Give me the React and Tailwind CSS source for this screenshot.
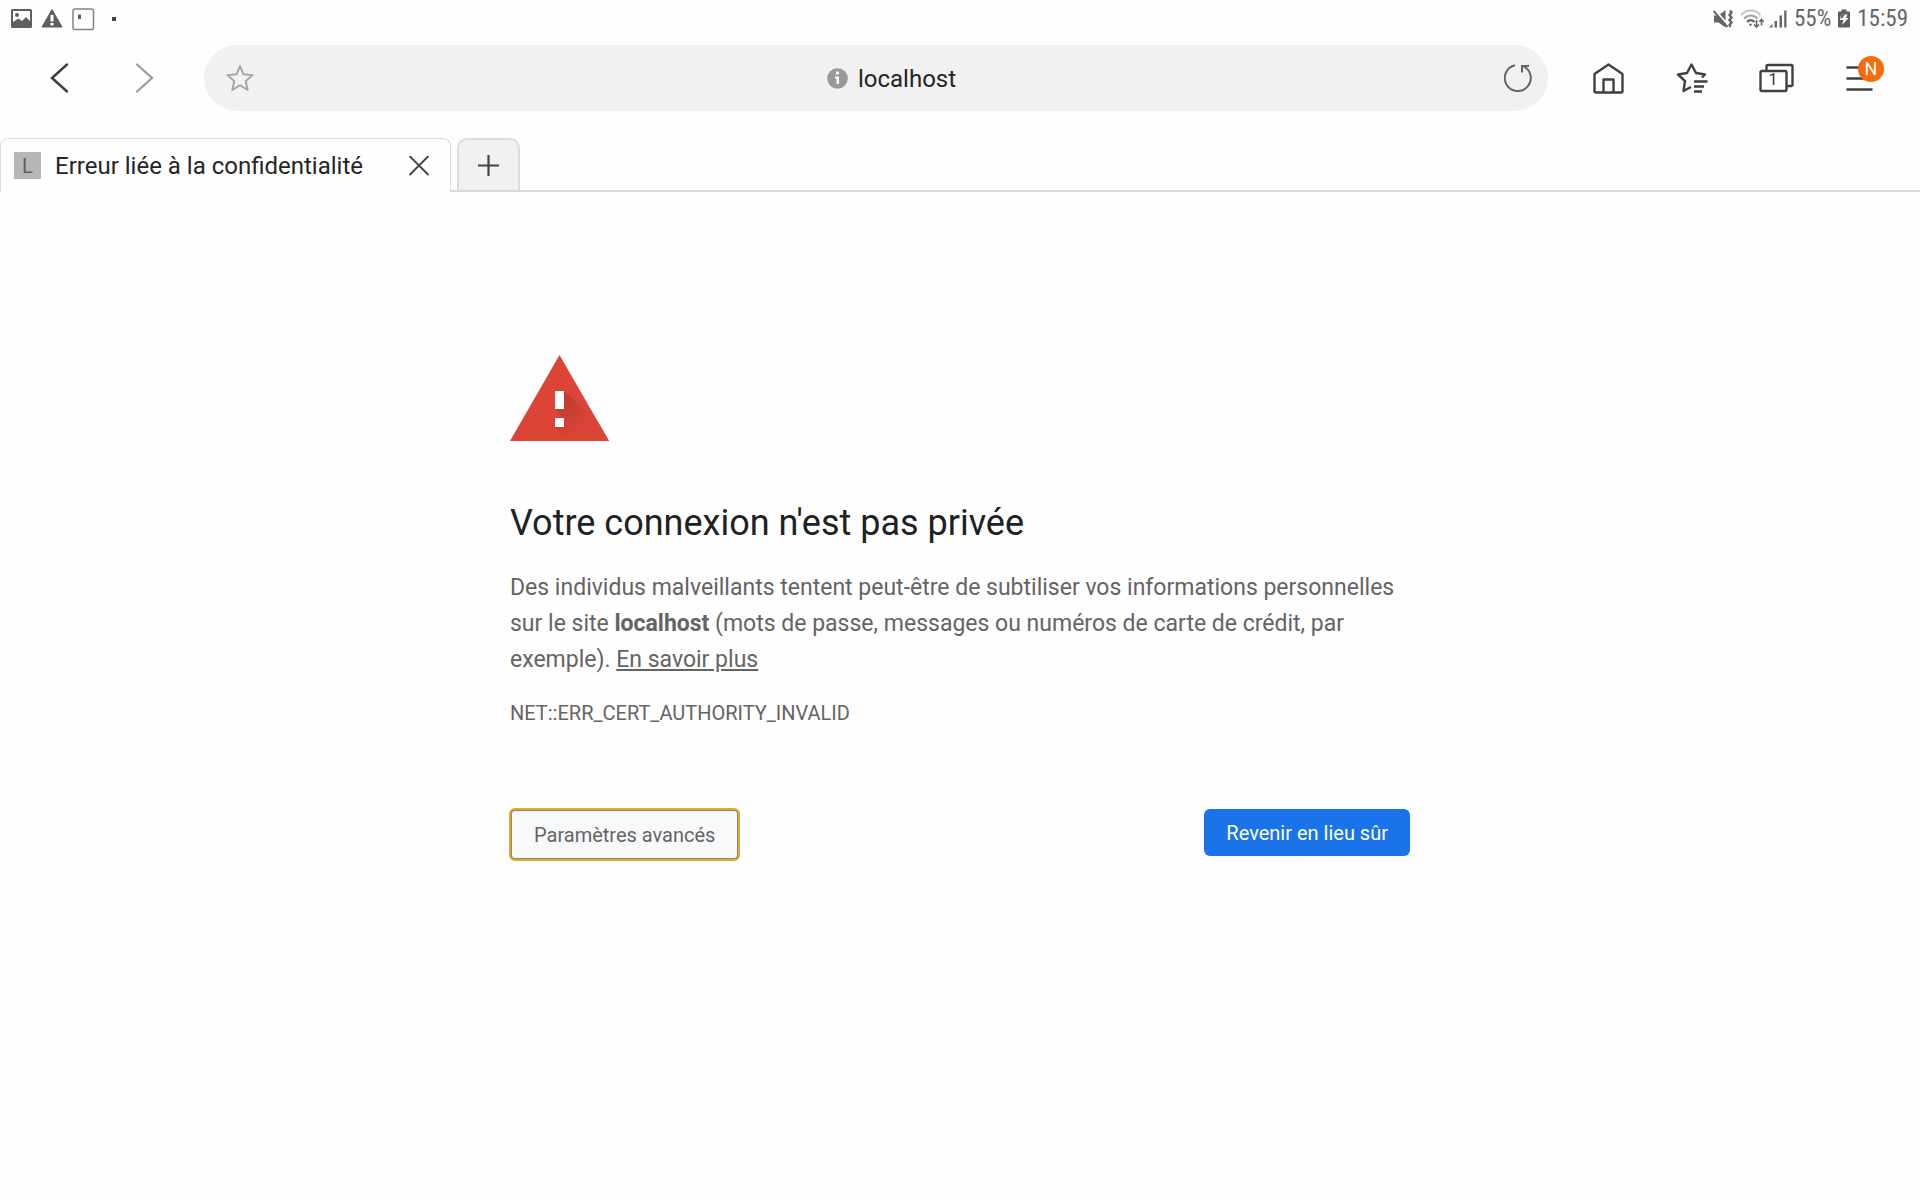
import React from "react";

function PictureIcon() {
  return (
    <svg className="h-5 w-[21px]" viewBox="0 0 21 20" aria-hidden="true">
      <path fillRule="evenodd" fill="#5f5f5f" d="M1.5 0h18A1.5 1.5 0 0 1 21 1.500v16a1.500 1.500 0 0 1-1.500 1.500h-18A1.500 1.500 0 0 1 0 17.500v-16A1.500 1.500 0 0 1 1.500 0zM2 2v11l5.500-3.500 3.500 2.500 4-4 4 4V2z" />
      <circle cx="6" cy="6" r="2" fill="#5f5f5f" />
    </svg>
  );
}

function AlertIcon() {
  return (
    <svg className="h-5 w-[22px]" viewBox="0 0 22 20" aria-hidden="true">
      <path d="M11 .5 21 18H1z" fill="#5f5f5f" stroke="#5f5f5f" strokeWidth="1" strokeLinejoin="round" />
      <path d="M9.500 6h3v6.500h-3zM9.500 14h3v2.500h-3z" fill="#fff" />
    </svg>
  );
}

function AppIcon() {
  return (
    <svg className="h-[23px] w-[23px]" viewBox="0 0 23 23" aria-hidden="true">
      <rect x="1" y="1" width="20.500" height="20.500" rx="2" fill="none" stroke="#828282" strokeWidth="1.500" />
      <path d="M6 6.500h3v4.500H6z" fill="#5f5f5f" />
    </svg>
  );
}

function MuteIcon() {
  return (
    <svg className="h-5 w-5" viewBox="0 0 20 20" aria-hidden="true">
      <path d="M1 6.500h4.500L12.500 1v17.500L5.500 13.500H1z" fill="#666" />
      <path d="M1 0 15 16" stroke="#fff" strokeWidth="2" />
      <path d="M.5 1.800 14.500 18" stroke="#666" strokeWidth="2" />
      <path d="M17 1.500l1.500 2-2 2.500 2 2.500-2 2.500 2 2.500-2 2.500 1 2" fill="none" stroke="#666" strokeWidth="2.400" />
    </svg>
  );
}

function WifiIcon() {
  return (
    <svg className="h-5 w-[25px]" viewBox="0 0 25 20" fill="none" aria-hidden="true">
      <path d="M1 6C6.500 0 15 0 20.500 6" stroke="#c4c4c4" strokeWidth="2" />
      <path d="M4 9.500c4-4 9.500-4 13.500 0" stroke="#a2a2a2" strokeWidth="2" />
      <path d="M7 13c2.500-2.500 5-2.500 7.500 0" stroke="#666" strokeWidth="2" />
      <path d="M8.500 14.800h4l-2 2.400z" fill="#666" />
      <path d="M16.500 11v7M14 15.500l2.500 2.500 2.500-2.500M21.500 16.500v-6M19.300 12.800l2.200-2.300 2.200 2.300" stroke="#666" strokeWidth="1.600" />
    </svg>
  );
}

function SignalIcon() {
  return (
    <svg className="h-5 w-[18px]" viewBox="0 0 18 20" aria-hidden="true">
      <path d="M0 18.500 3.500 15v3.500zM5.500 12H8v6.500H5.500zM10.500 6.500H13v12h-2.500zM15.200 1.500H17.500v17h-2.300z" fill="#666" />
    </svg>
  );
}

function BatteryIcon() {
  return (
    <svg className="h-5 w-3" viewBox="0 0 12 20" aria-hidden="true">
      <path d="M3.500 .5h5v2H11a1 1 0 0 1 1 1v14a1 1 0 0 1-1 1H1a1 1 0 0 1-1-1v-14a1 1 0 0 1 1-1h2.500z" fill="#5f5f5f" />
      <path d="M3 5.500h6.500L8 9h2.500L4 16l1.500-5H2z" fill="#fff" />
      <path d="M3 5.500h4L4 9.500H3z" fill="#5f5f5f" />
    </svg>
  );
}

function StatusBar() {
  return (
    <header className="flex h-9 items-center justify-between pl-[11px] pr-3 pt-0.5 text-[23px] text-[#666]">
      <div className="flex items-center gap-[9px]">
        <PictureIcon />
        <AlertIcon />
        <AppIcon />
        <span className="ml-2 h-1 w-1 bg-[#444]" />
      </div>
      <div className="flex items-center gap-[7px] font-['Roboto_Condensed',Roboto,sans-serif]">
        <MuteIcon />
        <div className="flex gap-1">
          <WifiIcon />
          <SignalIcon />
        </div>
        <span>55%</span>
        <BatteryIcon />
        <time>15:59</time>
      </div>
    </header>
  );
}

function IconButton({ label, className, children }) {
  return (
    <button type="button" aria-label={label} className={`flex h-12 w-[84px] items-center justify-center ${className || ""}`}>
      {children}
    </button>
  );
}

function Toolbar() {
  return (
    <nav className="flex h-[84px] items-center px-[18px]">
      <IconButton label="Précédent">
        <svg className="h-8 w-8" viewBox="0 0 32 32" fill="none" stroke="#3f3f3f" strokeWidth="2.500" strokeLinecap="round">
          <path d="M23 2.500 8 16l15 13.500" />
        </svg>
      </IconButton>
      <IconButton label="Suivant">
        <svg className="h-8 w-8" viewBox="0 0 32 32" fill="none" stroke="#9e9e9e" strokeWidth="2.300" strokeLinecap="round">
          <path d="M9 2.500 24 16 9 29.500" />
        </svg>
      </IconButton>
      <div className="mx-[18px] flex h-[66px] flex-1 items-center rounded-full bg-[#f1f1f1] pl-[21px] pr-3">
        <button type="button" aria-label="Ajouter aux favoris" className="flex h-9 w-[30px] items-center justify-center">
          <svg className="h-7 w-7" viewBox="0 0 28 28" fill="none" stroke="#a2a2a2" strokeWidth="1.900" strokeLinejoin="round">
            <path d="m14 2 3.500 8.300 9 .8-6.800 6 2 8.900L14 21.300 6.300 26l2-8.900-6.800-6 9-.8z" />
          </svg>
        </button>
        <div className="flex flex-1 items-center justify-center gap-[10px] pl-7">
          <svg className="h-[21px] w-[21px]" viewBox="0 0 21 21" aria-hidden="true">
            <circle cx="10.500" cy="10.500" r="10.300" fill="#999" />
            <circle cx="10.500" cy="5" r="1.700" fill="#fff" />
            <path d="M8 8.500h4v7.500H9.500v-5.500H8z" fill="#fff" />
          </svg>
          <span className="pt-0.5 text-2xl text-[#252525]">localhost</span>
        </div>
        <button type="button" aria-label="Actualiser" className="flex h-9 w-9 items-center justify-center">
          <svg className="h-7 w-7" viewBox="0 0 28 28" fill="none" stroke="#666" strokeWidth="2">
            <path d="M11 1.300A13 13 0 1 0 19.500 2.300" />
            <path d="M18 8.500V2h7" />
          </svg>
        </button>
      </div>
      <IconButton label="Accueil">
        <svg className="h-8 w-8" viewBox="0 0 32 32" fill="none" stroke="#404040" strokeWidth="2.400" strokeLinejoin="round">
          <path d="M2.500 12 16.500 2.500l14 9.500v17a1.500 1.500 0 0 1-1.500 1.500H4A1.500 1.500 0 0 1 2.500 29z" />
          <path d="M11.500 30V17.500h10V30" />
        </svg>
      </IconButton>
      <IconButton label="Favoris">
        <svg className="h-8 w-8" viewBox="0 0 32 32" fill="none" stroke="#404040" strokeWidth="2.400" strokeLinejoin="round">
          <path d="M26 15.500l3-3-9-1.500-4.500-8.500L11 11l-9 1.500 7 6.500-1.500 10 7.500-4" />
          <path d="M18 19.500h13.500M18 24.500h10M18 29.500h8" />
        </svg>
      </IconButton>
      <IconButton label="Onglets" className="relative">
        <svg className="h-8 w-9" viewBox="0 0 36 32" fill="none" stroke="#404040" strokeWidth="2.400" strokeLinejoin="round">
          <rect x="2.500" y="9" width="26" height="20" rx="1.500" />
          <path d="M8.500 9V4.500A1.500 1.500 0 0 1 10 3h23a1.500 1.500 0 0 1 1.500 1.500v18A1.500 1.500 0 0 1 33 24h-4.500" />
        </svg>
        <span className="absolute inset-y-0 left-6 flex w-[30px] items-center justify-center pt-1 text-base text-[#333]">1</span>
      </IconButton>
      <IconButton label="Menu" className="relative">
        <svg className="h-8 w-8" viewBox="0 0 32 32" stroke="#404040" strokeWidth="2.400" aria-hidden="true">
          <path d="M2.500 5.500h26M2.500 16.500h26M2.500 27.500h26" />
        </svg>
        <span className="absolute left-10 top-0.5 flex h-[26px] w-[26px] items-center justify-center rounded-full bg-[#f66b0e] text-lg text-white">N</span>
      </IconButton>
    </nav>
  );
}

function TabStrip() {
  return (
    <div className="mt-[18px] flex h-[54px]">
      <div className="flex w-[451px] items-center rounded-t-lg border border-b-0 border-[#dcdcdc] pl-[13px] pr-[17px]">
        <span className="flex h-[27px] w-[27px] items-center justify-center bg-[#b7b7b7] text-xl text-[#606060]">L</span>
        <span className="ml-3.5 flex-1 text-2xl text-[#252525]">Erreur liée à la confidentialité</span>
        <button type="button" aria-label="Fermer l’onglet" className="flex h-7 w-7 items-center justify-center">
          <svg className="h-5 w-5" viewBox="0 0 20 20" stroke="#444" strokeWidth="1.900" strokeLinecap="round">
            <path d="m1 .5 18 18M19 .5 1 18.500" />
          </svg>
        </button>
      </div>
      <div className="flex flex-1 border-b-2 border-[#d8d8d8] pl-1.5">
        <button type="button" aria-label="Nouvel onglet" className="flex w-[63px] items-center justify-center rounded-t-[10px] border-x-2 border-t-2 border-[#dcdcdc] bg-[#f1f1f1]">
          <svg className="h-[21px] w-[21px]" viewBox="0 0 21 21" stroke="#444" strokeWidth="2.200">
            <path d="M0 10.500h21M10.500 0v21" />
          </svg>
        </button>
      </div>
    </div>
  );
}

function WarningTriangle() {
  return (
    <svg className="h-[86px] w-[99px]" viewBox="0 0 99 86" role="img" aria-label="Avertissement">
      <defs>
        <linearGradient id="shade" gradientUnits="userSpaceOnUse" x1="50" y1="50" x2="72" y2="72">
          <stop offset="0" stopColor="#c13c30" />
          <stop offset="1" stopColor="#db4437" />
        </linearGradient>
      </defs>
      <path d="M49.500 0 99 86H0z" fill="#db4437" />
      <path d="M54 36l34 31 11 19H59L45 72l9-9-9-9z" fill="url(#shade)" />
      <path d="M45 36h9v18h-9zM45 63h9v9h-9z" fill="#fff" />
    </svg>
  );
}

export default function App() {
  return (
    <div className="min-h-screen bg-[#fefefe] font-[Roboto,sans-serif]">
      <StatusBar />
      <Toolbar />
      <TabStrip />
      <main className="mx-auto max-w-[900px] pt-[163px] text-[#646464]">
        <WarningTriangle />
        <h1 className="mt-[59px] text-4xl leading-[46px] text-[#202124]">Votre connexion n'est pas privée</h1>
        <p className="mt-6 text-[23px] leading-9">
          Des individus malveillants tentent peut-être de subtiliser vos informations personnelles sur le site <strong>localhost</strong> (mots de passe, messages ou numéros de carte de crédit, par exemple).{" "}
          <a href="#details" className="underline">En savoir plus</a>
        </p>
        <p className="mt-[17px] text-xl leading-9">NET::ERR_CERT_AUTHORITY_INVALID</p>
        <div className="mt-[78px] flex items-start justify-between text-xl">
          <button type="button" className="h-[51px] rounded-[5px] border-2 border-[#8a867c] bg-[#f8f9fb] px-[22px] outline-2 -outline-offset-1 outline-[#e5a62c]">Paramètres avancés</button>
          <button type="button" className="h-[47px] rounded-md bg-[#1a73e8] px-[22px] text-white">Revenir en lieu sûr</button>
        </div>
      </main>
    </div>
  );
}
